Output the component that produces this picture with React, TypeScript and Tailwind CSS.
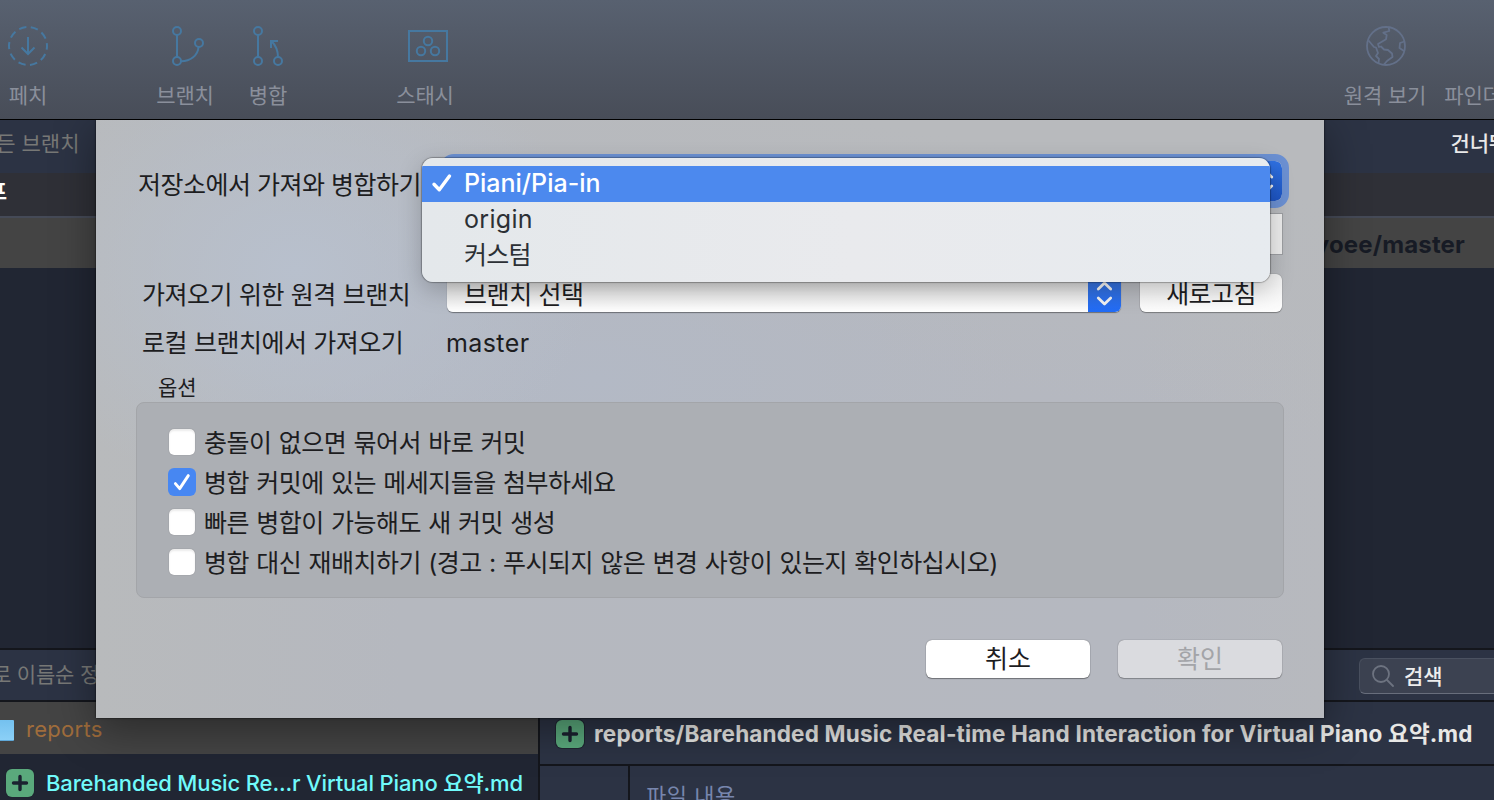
import type { ReactNode } from "react";

function ToolItem({ label, className, children }: { label: string; className: string; children?: ReactNode }) {
  return (
    <div className={`flex shrink-0 flex-col items-center pt-[26px] ${className}`}>
      <div className="flex h-10 w-full items-center justify-center">{children}</div>
      <span className="mt-4 whitespace-nowrap text-[21px] leading-[28px] tracking-[-0.1px] text-[#8a8f9b]">
        {label}
      </span>
    </div>
  );
}

function PlusBadge() {
  return (
    <svg className="shrink-0" width="30" height="30" viewBox="0 0 30 30">
      <rect x="0" y="0" width="30" height="30" rx="7" fill="#1f2531" />
      <rect x="1" y="1" width="28" height="28" rx="6" fill="#5aa97c" />
      <path d="M15 8.5v13M8.5 15h13" stroke="#1b2230" strokeWidth="3.4" strokeLinecap="round" />
    </svg>
  );
}

function Chevrons() {
  return (
    <svg width="33" height="38" viewBox="0 0 33 38" fill="none" stroke="#f4f4f4" strokeWidth="2.8" strokeLinecap="round" strokeLinejoin="round">
      <path d="M10.3 15l6.2-6 6.2 6M10.3 24l6.2 6 6.2-6" />
    </svg>
  );
}

function Option({ label, checked }: { label: string; checked?: boolean }) {
  return (
    <label className="flex h-10 items-center">
      {checked ? (
        <span className="flex size-7 items-center justify-center rounded-[6px] bg-[#4787f2]">
          <svg width="28" height="28" viewBox="0 0 28 28" fill="none" stroke="#fff" strokeWidth="2.9" strokeLinecap="round" strokeLinejoin="round">
            <path d="M7.4 15.6l4.3 5L20.3 7.6" />
          </svg>
        </span>
      ) : (
        <span className="mx-px size-[26px] rounded-[5px] bg-white shadow-[0_0_1px_rgba(0,0,0,0.35),inset_0_2px_2px_rgba(0,0,0,0.08)]" />
      )}
      <span className="ml-2 whitespace-nowrap pt-[2px] tracking-[-0.5px] [word-spacing:0.7px]">{label}</span>
    </label>
  );
}

function Toolbar() {
  return (
    <div className="flex h-[120px] shrink-0 border-b border-black bg-linear-to-b from-[#586170] to-[#484d58]">
      <ToolItem label="페치" className="w-14">
        <svg width="40" height="40" viewBox="0 0 40 40" fill="none" stroke="#4678a0" strokeWidth="2">
          <circle cx="20" cy="20" r="19" strokeDasharray="7.4 4.54" strokeDashoffset="3.7" />
          <path d="M20 11v16.500M13.500 21.500L20 28l6.500-6.500" />
        </svg>
      </ToolItem>
      <ToolItem label="브랜치" className="ml-[84px] w-[90px]">
        <svg className="ml-[6px]" width="32" height="40" viewBox="0 0 32 40" fill="none" stroke="#4678a0" strokeWidth="2">
          <circle cx="5" cy="5" r="4" />
          <circle cx="5" cy="35" r="4" />
          <circle cx="27" cy="17" r="4" />
          <path d="M5 9v22M9 35.300c9.500 0 17-6 17.500-14.300" />
        </svg>
      </ToolItem>
      <ToolItem label="병합" className="w-[76px]">
        <svg width="30" height="40" viewBox="0 0 30 40" fill="none" stroke="#4678a0" strokeWidth="2">
          <circle cx="5" cy="5" r="4" />
          <circle cx="5" cy="35" r="4" />
          <circle cx="25" cy="35" r="4" />
          <path d="M5 9v22M25 31c0-6-2.200-11.500-6.500-16M18 22v-7h7" />
        </svg>
      </ToolItem>
      <ToolItem label="스태시" className="ml-[74px] w-[90px]">
        <svg className="ml-[6px]" width="40" height="32" viewBox="0 0 40 32" fill="none" stroke="#4678a0" strokeWidth="2">
          <rect x="1" y="1" width="38" height="30" />
          <circle cx="20" cy="11" r="4.200" />
          <circle cx="13" cy="21" r="4.200" />
          <circle cx="27" cy="21" r="4.200" />
        </svg>
      </ToolItem>
      <div className="flex-1" />
      <ToolItem label="원격 보기" className="w-[90px]">
        <svg className="ml-[2px]" width="40" height="40" viewBox="0 0 40 40" fill="none" stroke="#637089" strokeWidth="1.800" strokeLinejoin="round">
          <circle cx="20" cy="20" r="19" />
          <path d="M22.700 1.500l.6 3.500-6 1.700 3.400 2.300-.7 4.300-8 4.700 1 3 2-.5 3 3 4 .5 4 3.500.5 3.500-5.500 4-3 3.500M2.500 14.500l5.500 6.500 2 .5 2 5.500-2 3 3 3-.5 4.500M38.300 15.500l-4.300 1.500-.5 5 4.500 3" />
        </svg>
      </ToolItem>
      <ToolItem label="파인더" className="w-[86px]" />
      <div className="-mr-[22px] w-0" />
    </div>
  );
}

function Workspace() {
  return (
    <div className="flex min-h-0 flex-1 flex-col">
      <div className="flex h-[53px] shrink-0 items-start justify-between bg-[#2c3344] pt-[10px] text-[21px] leading-[28px]">
        <span className="-ml-[23px] whitespace-nowrap text-[#777876]">모든 브랜치</span>
        <span className="-mr-[33px] whitespace-nowrap font-medium tracking-[-0.2px] text-[#e9e9e9]">건너뛰기</span>
      </div>
      <div className="h-[43px] shrink-0 bg-[#2f3037] pt-[5px] text-[21px] font-bold leading-[28px] text-white">
        <span className="-ml-[51px] inline-block">그래프</span>
      </div>
      <div className="flex h-[52px] shrink-0 items-center justify-end border-t-2 border-[#454a57] bg-[#444] pr-[29px] text-[24px] font-bold text-[#171b25]">
        <span className="pt-[3px] tracking-[0.15px]">yoee/master</span>
      </div>
      <div className="flex-1 bg-[#212633]" />
      <div className="flex h-[54px] shrink-0 items-center justify-between border-y-2 border-[#14161c] bg-[#2c3344]">
        <span className="-ml-[8px] whitespace-nowrap text-[21px] leading-[28px] tracking-[-0.2px] text-[#777876]">로 이름순 정렬</span>
        <div className="mt-[2px] flex h-9 w-[135px] items-center rounded-l-[6px] border border-r-0 border-[#4a5160] border-b-[#686e7c] bg-[#3c4251] pl-3">
          <svg width="22" height="22" viewBox="0 0 22 22" fill="none" stroke="#6d7380" strokeWidth="1.800" strokeLinecap="round">
            <circle cx="9" cy="9" r="8" />
            <path d="M15 15l6 6" />
          </svg>
          <span className="ml-[10px] pt-px text-[21px] font-medium leading-[28px] text-[#ededed]">검색</span>
        </div>
      </div>
      <div className="flex h-[98px] shrink-0">
        <div className="flex w-[540px] shrink-0 flex-col border-r-2 border-[#14161c] bg-[#212633]">
          <div className="flex h-[52px] shrink-0 items-center bg-[#444]">
            <span className="mt-[5px] h-[21px] w-[14px] rounded-r-[1px] border-b border-[#5fa8d8] bg-linear-to-b from-[#74c1ef] to-[#8bd0f7]" />
            <span className="ml-3 pt-[2px] text-[22px] leading-[28px] tracking-[0.3px] text-[#a06d3c]">reports</span>
          </div>
          <div className="flex h-[58px] shrink-0 items-center pl-[5px]">
            <PlusBadge />
            <span className="ml-[11px] whitespace-nowrap text-[22px] font-medium leading-[28px] tracking-[-0.14px] text-[#70fafb]">
              Barehanded Music Re...r Virtual Piano 요약.md
            </span>
          </div>
        </div>
        <div className="flex min-w-0 flex-1 flex-col bg-[#2c3344]">
          <div className="flex h-[64px] shrink-0 items-center border-b-2 border-[#14161c] pl-[15px] pt-[2px]">
            <PlusBadge />
            <span className="ml-[9px] whitespace-nowrap text-[22.500px] font-bold leading-[28px] tracking-[0.18px] text-[#e8e8e6]">
              reports/Barehanded Music Real-time Hand Interaction for Virtual Piano 요약.md
            </span>
          </div>
          <div className="flex min-h-0 flex-1 overflow-hidden">
            <div className="w-[90px] shrink-0 border-r-2 border-[#14161c]" />
            <span className="pl-4 pt-4 text-[22px] leading-[28px] tracking-[0.5px] text-[#7786ad]">파일 내용</span>
          </div>
        </div>
      </div>
    </div>
  );
}

function Dialog() {
  return (
    <div className="flex h-[598px] w-[1228px] flex-col bg-[#b6b9c0] bg-[radial-gradient(ellipse_300px_230px_at_200px_150px,#b8c0cd,#b8c0cd00),radial-gradient(ellipse_420px_200px_at_500px_260px,#b3b9c5,#b3b9c500),linear-gradient(10deg,#b7babf00_60%,#b8babd_90%),linear-gradient(90deg,#b8babc,#b5b8bf_25%,#b5b8c0_85%,#b7b9be)] px-10 text-[25px] leading-[36px] text-[#1d1d1f] shadow-[0_10px_40px_rgba(0,0,0,0.4),0_0_2px_rgba(0,0,0,0.8)]">
      <div className="mt-[41px] flex h-10 shrink-0 items-center pl-[2px]">
        <span className="w-[309px] shrink-0 whitespace-nowrap pt-[7px] tracking-[-0.5px]">저장소에서 가져와 병합하기</span>
        <div className="flex h-10 w-[835px] justify-end overflow-hidden rounded-[7px] bg-white outline-7 outline-[#6b90d2]">
          <div className="flex w-[33px] items-center bg-linear-to-b from-[#2f71e2] to-[#1d54c2]">
            <Chevrons />
          </div>
        </div>
      </div>
      <div className="ml-[311px] mt-[13px] h-10 w-[835px] shrink-0 bg-[#ececec] shadow-[0_0_0_1px_#9c9ea2]" />
      <div className="mt-5 flex h-[38px] shrink-0 pl-[6px]">
        <span className="w-[305px] shrink-0 whitespace-nowrap pt-[3px] tracking-[-0.5px] [word-spacing:0.4px]">가져오기 위한 원격 브랜치</span>
        <div className="flex w-[674px] justify-between overflow-hidden rounded-[6px] bg-linear-to-b from-[#c5c5c5] via-[#e9e9e9] to-[#ffffff] shadow-[0_1px_1px_rgba(0,0,0,0.4)]">
          <span className="pl-[17px] pt-[3px] tracking-[-0.4px]">브랜치 선택</span>
          <div className="flex w-[33px] items-center bg-linear-to-b from-[#3a70d0] to-[#216cf7]">
            <Chevrons />
          </div>
        </div>
        <div className="ml-[19px] h-[38px] w-[142px] rounded-[6px] bg-linear-to-b from-[#efefef] to-[#fdfdfd] pt-[2px] text-center tracking-[-0.6px] shadow-[0_0_1px_rgba(0,0,0,0.5),0_1px_1px_rgba(0,0,0,0.3)]">
          새로고침
        </div>
      </div>
      <div className="mt-[13px] flex h-9 shrink-0 pl-[6px]">
        <span className="w-[304px] shrink-0 tracking-[-0.5px] [word-spacing:0.4px]">로컬 브랜치에서 가져오기</span>
        <span className="tracking-[0.4px]">master</span>
      </div>
      <span className="mt-[13px] h-[28px] shrink-0 pl-[22px] text-[21px] leading-[28px]">옵션</span>
      <div className="h-[196px] w-[1148px] shrink-0 rounded-[8px] border border-[#a3a5a9] bg-[#acafb4] pl-[31px] pt-[19px]">
        <Option label="충돌이 없으면 묶어서 바로 커밋" />
        <Option label="병합 커밋에 있는 메세지들을 첨부하세요" checked />
        <Option label="빠른 병합이 가능해도 새 커밋 생성" />
        <Option label="병합 대신 재배치하기 (경고 : 푸시되지 않은 변경 사항이 있는지 확인하십시오)" />
      </div>
      <div className="mt-[42px] flex shrink-0 justify-end gap-7 pr-[2px]">
        <button className="h-[38px] w-[164px] rounded-[6px] bg-white leading-[36px] shadow-[0_0_1px_rgba(0,0,0,0.6),0_1px_1px_rgba(0,0,0,0.35)]">취소</button>
        <button className="h-[38px] w-[164px] rounded-[6px] bg-[#dadbdf] leading-[36px] text-[#a3a4a8] shadow-[0_0_1px_rgba(0,0,0,0.5),0_1px_1px_rgba(0,0,0,0.25)]">확인</button>
      </div>
    </div>
  );
}

function Menu() {
  return (
    <div className="h-[124px] w-[848px] overflow-hidden rounded-[11px] bg-linear-to-r from-[#e4e8eb] via-[#e9eaed] to-[#e7ebef] pt-2 text-[25px] leading-[34px] text-[#2c3035]">
      <div className="flex h-9 items-start bg-[#4c89ee] text-white">
        <svg className="ml-[9px] mr-[11px] mt-[7px]" width="22" height="20" viewBox="0 0 22 20" fill="none" stroke="#fff" strokeWidth="3.400" strokeLinecap="round" strokeLinejoin="round">
          <path d="M3 11.300l5.300 5.500L18.500 3" />
        </svg>
        <span className="font-medium">Piani/Pia-in</span>
      </div>
      <div className="h-9 pl-[42px] tracking-[0.3px]">origin</div>
      <div className="h-9 pl-[42px] tracking-[-0.8px]">커스텀</div>
    </div>
  );
}

export default function App() {
  return (
    <div className="relative flex h-[800px] w-[1494px] flex-col overflow-hidden font-['Inter','Noto_Sans_CJK_KR',sans-serif]">
      <Toolbar />
      <Workspace />
      <div className="absolute inset-x-0 bottom-0 top-[120px] overflow-hidden pl-24">
        <Dialog />
      </div>
      <div className="absolute left-[422px] top-[158px] rounded-[11px] shadow-[0_0_1px_1px_rgba(0,0,0,0.28),0_8px_24px_rgba(0,0,0,0.22)]">
        <Menu />
      </div>
    </div>
  );
}
